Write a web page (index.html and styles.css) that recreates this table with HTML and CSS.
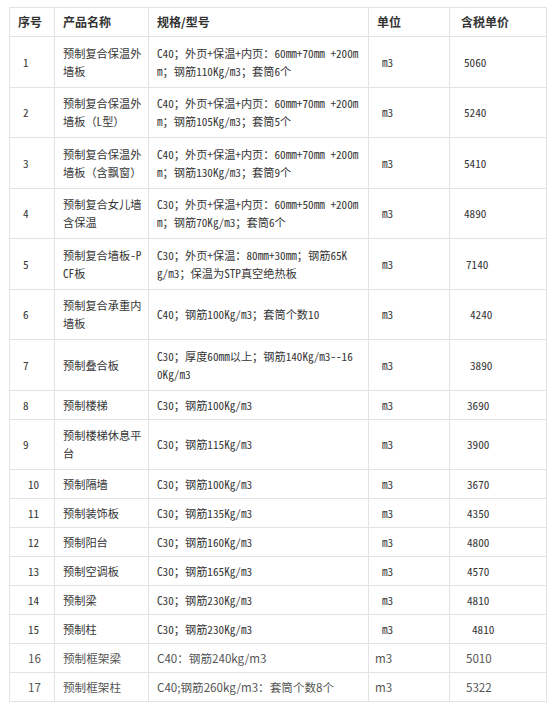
FILE: index.html
```html
<!DOCTYPE html>
<html lang="zh-CN">
<head>
<meta charset="utf-8">
<title>预制构件价格表</title>
<link rel="stylesheet" href="styles.css">
</head>
<body>
<div class="wrap">
<table class="price">
  <colgroup>
    <col class="c-no"><col class="c-name"><col class="c-spec"><col class="c-unit"><col class="c-cost">
  </colgroup>
  <thead>
    <tr class="hd">
      <th>序号</th><th>产品名称</th><th>规格/型号</th><th>单位</th><th class="th-cost">含税单价</th>
    </tr>
  </thead>
  <tbody>
    <tr class="h2"><td class="n1">1</td><td>预制复合保温外<br>墙板</td><td>C40；外页+保温+内页：60mm+70mm +200m<br>m；钢筋110Kg/m3；套筒6个</td><td class="u">m3</td><td class="pa">5060</td></tr>
    <tr class="h2"><td class="n1">2</td><td>预制复合保温外<br>墙板（L型）</td><td>C40；外页+保温+内页：60mm+70mm +200m<br>m；钢筋105Kg/m3；套筒5个</td><td class="u">m3</td><td class="pa">5240</td></tr>
    <tr class="h2"><td class="n1">3</td><td>预制复合保温外<br>墙板（含飘窗）</td><td>C40；外页+保温+内页：60mm+70mm +200m<br>m；钢筋130Kg/m3；套筒9个</td><td class="u">m3</td><td class="pa">5410</td></tr>
    <tr class="h2"><td class="n1">4</td><td>预制复合女儿墙<br>含保温</td><td>C30；外页+保温+内页：60mm+50mm +200m<br>m；钢筋70Kg/m3；套筒6个</td><td class="u">m3</td><td class="pa">4890</td></tr>
    <tr class="h2"><td class="n1">5</td><td>预制复合墙板-P<br>CF板</td><td>C30；外页+保温：80mm+30mm；钢筋65K<br>g/m3；保温为STP真空绝热板</td><td class="u">m3</td><td class="pb">7140</td></tr>
    <tr class="h2"><td class="n1">6</td><td>预制复合承重内<br>墙板</td><td>C40；钢筋100Kg/m3；套筒个数10</td><td class="u">m3</td><td class="pc">4240</td></tr>
    <tr class="h2"><td class="n1">7</td><td>预制叠合板</td><td>C30；厚度60mm以上；钢筋140Kg/m3--16<br>0Kg/m3</td><td class="u">m3</td><td class="pc">3890</td></tr>
    <tr class="h1"><td class="n1">8</td><td>预制楼梯</td><td>C30；钢筋100Kg/m3</td><td class="u">m3</td><td class="pd">3690</td></tr>
    <tr class="h2"><td class="n1">9</td><td>预制楼梯休息平<br>台</td><td>C30；钢筋115Kg/m3</td><td class="u">m3</td><td class="pd">3900</td></tr>
    <tr class="h1"><td class="n2">10</td><td>预制隔墙</td><td>C30；钢筋100Kg/m3</td><td class="u">m3</td><td class="pd">3670</td></tr>
    <tr class="h1"><td class="n2">11</td><td>预制装饰板</td><td>C30；钢筋135Kg/m3</td><td class="u">m3</td><td class="pd">4350</td></tr>
    <tr class="h1"><td class="n2">12</td><td>预制阳台</td><td>C30；钢筋160Kg/m3</td><td class="u">m3</td><td class="pd">4800</td></tr>
    <tr class="h1"><td class="n2">13</td><td>预制空调板</td><td>C30；钢筋165Kg/m3</td><td class="u">m3</td><td class="pd">4570</td></tr>
    <tr class="h1"><td class="n2">14</td><td>预制梁</td><td>C30；钢筋230Kg/m3</td><td class="u">m3</td><td class="pd">4810</td></tr>
    <tr class="h1"><td class="n2">15</td><td>预制柱</td><td>C30；钢筋230Kg/m3</td><td class="u">m3</td><td class="pe">4810</td></tr>
    <tr class="h1 sans"><td class="n2">16</td><td>预制框架梁</td><td>C40：钢筋240kg/m3</td><td class="u2">m3</td><td class="pb">5010</td></tr>
    <tr class="h1 sans"><td class="n2">17</td><td>预制框架柱</td><td>C40;钢筋260kg/m3：套筒个数8个</td><td class="u2">m3</td><td class="pb">5322</td></tr>
  </tbody>
</table>
</div>
</body>
</html>
```

FILE: styles.css
```css
body {
  margin: 0;
  background: #ffffff;
}

.wrap {
  padding: 7px 0 0 9px;
}

.price {
  border-collapse: collapse;
  table-layout: fixed;
  width: 537px;
  font-family: "Noto Sans Mono CJK SC", "Liberation Mono", "Noto Sans CJK SC", monospace;
  font-size: 11.2px;
  color: #363636;
}

.c-no { width: 45px; }
.c-name { width: 94px; }
.c-spec { width: 220px; }
.c-unit { width: 81px; }
.c-cost { width: 97px; }

.price th,
.price td {
  border: 1px solid #e3e3e3;
  padding: 0 0 0 8px;
  text-align: left;
  vertical-align: middle;
  line-height: 18px;
  white-space: nowrap;
  overflow: hidden;
}

.price th {
  font-family: "Noto Sans CJK SC", "Noto Sans", sans-serif;
  font-size: 12px;
  font-weight: 700;
  color: #333333;
}

.price th.th-cost { padding-left: 11px; }

.hd { height: 29px; }
.h1 { height: 29px; }
.h2 { height: 50.5px; }

.price td.n1 { padding-left: 13px; }
.price td.n2 { padding-left: 18px; }

.price td.u { padding-left: 13px; }
.price td.u2 { padding-left: 6px; }

.price td.pa { padding-left: 14px; }
.price td.pb { padding-left: 16px; }
.price td.pc { padding-left: 20px; }
.price td.pd { padding-left: 17px; }
.price td.pe { padding-left: 22px; }

.sans td {
  font-family: "Noto Sans CJK SC", "Noto Sans", sans-serif;
  font-size: 11.6px;
  color: #555555;
}
```
